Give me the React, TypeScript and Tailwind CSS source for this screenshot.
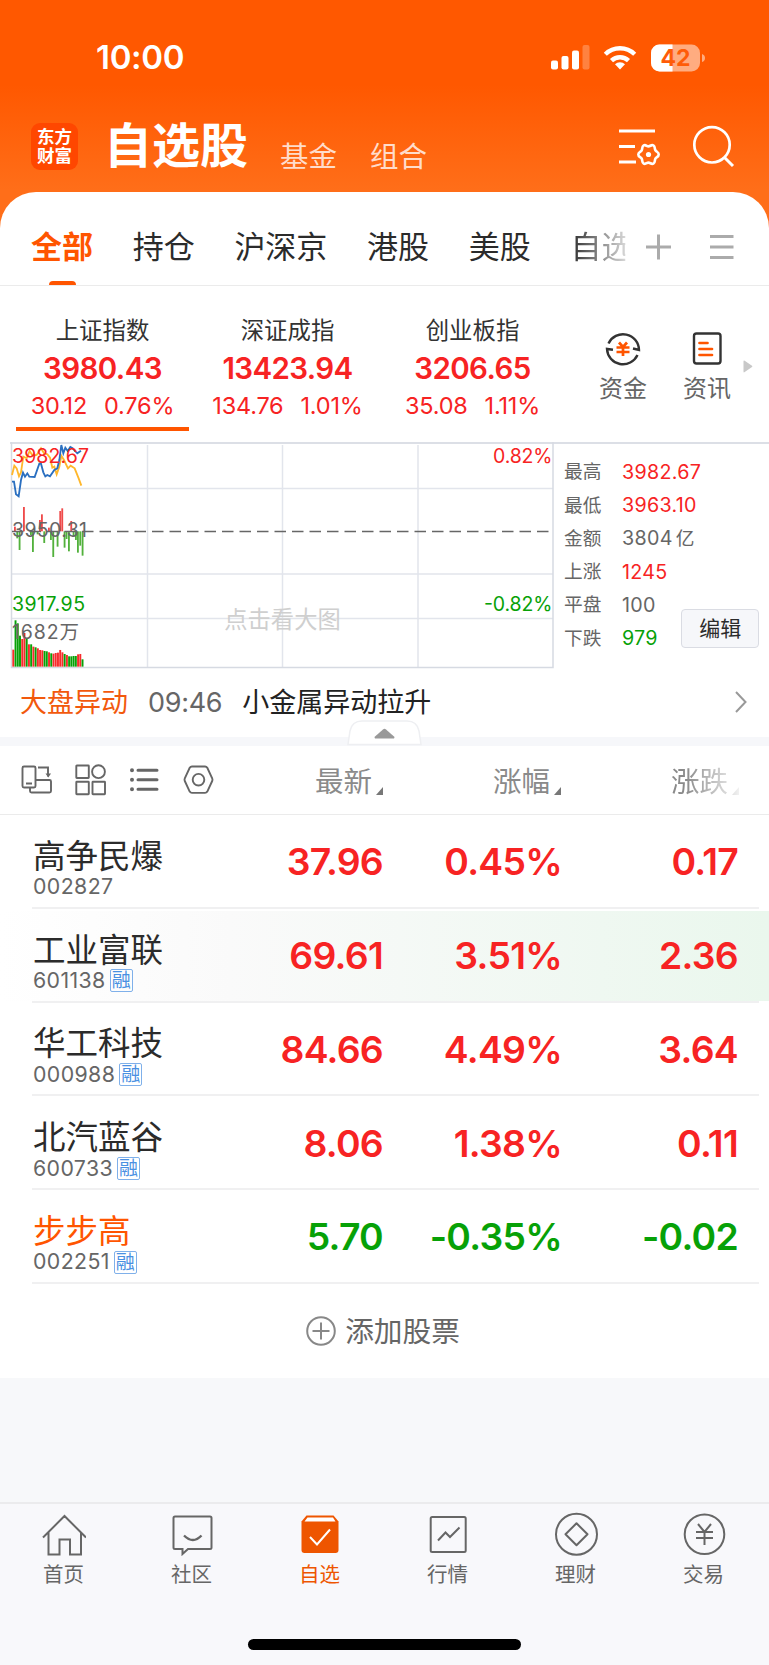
import clsx from "clsx";
import { ReactNode } from "react";

const TABS = ["全部", "持仓", "沪深京", "港股", "美股"];

const INDICES = [
  { name: "上证指数", value: "3980.43", diff: "30.12", rate: "0.76%" },
  { name: "深证成指", value: "13423.94", diff: "134.76", rate: "1.01%" },
  { name: "创业板指", value: "3206.65", diff: "35.08", rate: "1.11%" },
];

const STATS = [
  { label: "最高", value: "3982.67", color: "text-[#f72323]" },
  { label: "最低", value: "3963.10", color: "text-[#f72323]" },
  { label: "金额", value: "3804", unit: "亿", color: "text-[#666]" },
  { label: "上涨", value: "1245", color: "text-[#f72323]" },
  { label: "平盘", value: "100", color: "text-[#666]" },
  { label: "下跌", value: "979", color: "text-[#07a107]" },
];

type Stock = {
  name: string;
  code: string;
  margin?: boolean;
  price: string;
  rate: string;
  diff: string;
  down?: boolean;
  held?: boolean;
  flash?: boolean;
};

const STOCKS: Stock[] = [
  { name: "高争民爆", code: "002827", price: "37.96", rate: "0.45%", diff: "0.17" },
  { name: "工业富联", code: "601138", margin: true, price: "69.61", rate: "3.51%", diff: "2.36", flash: true },
  { name: "华工科技", code: "000988", margin: true, price: "84.66", rate: "4.49%", diff: "3.64" },
  { name: "北汽蓝谷", code: "600733", margin: true, price: "8.06", rate: "1.38%", diff: "0.11" },
  { name: "步步高", code: "002251", margin: true, price: "5.70", rate: "-0.35%", diff: "-0.02", down: true, held: true },
];

const PRICE_LINE =
  "36,140 42,140 48,178 56,184 63,135 69,113 75,125 82,115 88,125 104,126 118,86 123,86 130,112 136,124 142,120 150,124 163,105 172,100 178,75 184,30 190,55 196,38 203,48 211,36 218,40 232,55 243,47";
const AVERAGE_LINE =
  "36,120 43,92 50,100 57,124 63,112 70,65 80,70 89,48 98,62 110,60 123,40 132,55 142,58 150,68 157,98 163,95 170,118 178,95 184,62 192,75 204,100 212,92 224,100 236,130 244,152";

// [x, end of the bar], measured from the zero line at y = 289
const FLOW_BARS = [
  [45, 275], [52, 310], [59, 345], [72, 216], [93, 300], [99, 351], [113, 298], [120, 255],
  [126, 238], [133, 324], [147, 278], [153, 315], [160, 366], [173, 335], [181, 228], [187, 220],
  [194, 338], [200, 312], [207, 349], [214, 258], [221, 305], [228, 315], [234, 353], [241, 332], [248, 362],
];

const VOLUMES: [string, number][] = [
  ["r", 644], ["g", 556], ["g", 565], ["g", 602], ["r", 612], ["r", 594], ["g", 612], ["r", 628],
  ["g", 628], ["r", 635], ["g", 637], ["r", 640], ["r", 645], ["r", 646], ["g", 648], ["g", 649],
  ["r", 652], ["g", 655], ["r", 656], ["r", 654], ["r", 653], ["r", 645], ["r", 652], ["g", 657],
  ["r", 660], ["g", 664], ["g", 664], ["g", 663], ["g", 663], ["r", 658], ["r", 657], ["g", 673],
];

function StatusBar() {
  return (
    <div className="flex h-[115px] items-center pl-[96px] pr-[64px] text-white">
      <span className="text-[33px] font-semibold leading-none tracking-[-0.3px]">10:00</span>
      <svg className="ml-auto" width="154" height="28" viewBox="0 0 154 28" fill="#fff">
        <rect x="0" y="16.5" width="7" height="9" rx="2" />
        <rect x="10.5" y="12" width="7" height="13.5" rx="2" />
        <rect x="21" y="6.5" width="7" height="19" rx="2" />
        <rect x="31.5" y="1" width="7" height="24.5" rx="2" opacity="0.25" />
        <path d="M69 25.5l5-5.2a7 7 0 0 0-10 0z" />
        <path d="M60.5 16.7a12.2 12.2 0 0 1 17 0" fill="none" stroke="#fff" strokeWidth="4.4" />
        <path d="M54.3 10.3a21 21 0 0 1 29.4 0" fill="none" stroke="#fff" strokeWidth="4.4" />
        <clipPath id="charge">
          <rect x="100" y="0" width="21.5" height="28" />
        </clipPath>
        <rect x="100" y="0.5" width="49" height="27" rx="8.5" opacity="0.5" />
        <rect x="100" y="0.5" width="49" height="27" rx="8.5" clipPath="url(#charge)" />
        <path d="M151 10q3 1 3 4t-3 4z" opacity="0.5" />
        <text x="124.5" y="22.3" fill="#ff5c08" fontSize="23" fontWeight="700" textAnchor="middle">42</text>
      </svg>
    </div>
  );
}

function TitleBar() {
  return (
    <div className="flex h-[77px] items-start pl-[31px] pr-[32px] text-white">
      <div className="mt-[8px] flex h-[47px] w-[47px] flex-col items-center justify-center rounded-[9px] bg-[#ff4700] text-[17.5px] font-bold leading-[18.5px]">
        <span>东方</span>
        <span>财富</span>
      </div>
      <h1 className="ml-[26px] mt-[7px] whitespace-nowrap text-[48px] font-bold leading-[48px]">自选股</h1>
      <span className="ml-[32px] mt-[27px] text-[28.5px] leading-[30px] text-[#ffdccb]">基金</span>
      <span className="ml-[33px] mt-[27px] text-[28.5px] leading-[30px] text-[#ffdccb]">组合</span>
      <svg className="ml-auto mt-[10px]" width="118" height="46" viewBox="0 0 118 46" fill="none" stroke="#fff" strokeWidth="3">
        <path d="M0 6h36M0 21.5h16M0 37h17" />
        <path
          d="M19.3 29.5c0-2.6 2.4-2.4 3.4-4.2s0-3.8 2-4.900c2.2-1 3 1 4.800 1s2.700-2 4.900-1c2 1.100.9 3.100 2 4.900s3.300 1.600 3.300 4.200-2.300 2.400-3.300 4.200 0 3.800-2 4.900c-2.200 1-3.100-1-4.900-1s-2.600 2-4.800 1c-2-1.100-1-3.100-2-4.900s-3.400-1.600-3.400-4.200z"
          strokeWidth="2.6"
        />
        <circle cx="29.5" cy="29.5" r="2.6" fill="#fff" stroke="none" />
        <circle cx="93" cy="19.8" r="17.7" strokeWidth="2.7" />
        <path d="M105.5 32.5l8.500 8.5" strokeWidth="3" />
      </svg>
    </div>
  );
}

function GroupTabs() {
  return (
    <div className="flex h-[94px] items-stretch border-b border-[#ebebeb] pl-[31px] pr-[35px] text-[31px] text-[#2b2b2b]">
      <div className="flex gap-[39.7px]">
        {TABS.map((tab, i) => (
          <div
            key={tab}
            className={clsx("flex flex-col items-center", i === 0 && "font-bold text-[#ff5500]")}
          >
            <span className="mt-[35px] leading-[40px]">{tab}</span>
            {i === 0 && <i className="mt-auto h-[4px] w-[27px] rounded-t-sm bg-[#ff5500]" />}
          </div>
        ))}
        <span className="mt-[35px] whitespace-nowrap leading-[40px] [mask-image:linear-gradient(to_right,#000_0%,rgba(0,0,0,0.2)_88%,transparent_90%)]">
          自选
        </span>
      </div>
      <svg className="ml-auto mt-[42px]" width="88" height="26" viewBox="0 0 88 26" stroke="#ababab" strokeWidth="3">
        <path d="M0 13h25M12.5 0.5v25M64 2.5h23.5M64 13h23.5M64 23.5h23.5" />
      </svg>
    </div>
  );
}

function Shortcut({ label, children }: { label: string; children: ReactNode }) {
  return (
    <div className="flex w-[48px] flex-col items-center text-[24px] leading-[30px] text-[#666]">
      <svg width="36" height="36" viewBox="0 0 36 36" fill="none" strokeWidth="2.4" stroke="#333">
        {children}
      </svg>
      <span className="mt-[7px] whitespace-nowrap">{label}</span>
    </div>
  );
}

function IndexStrip() {
  return (
    <div className="flex h-[156px] pl-[10px] pr-[16px]">
      {INDICES.map((item, i) => (
        <div key={item.name} className="flex w-[185px] flex-col items-center pt-[32px]">
          <span className="text-[23.4px] leading-[26px] text-[#333]">{item.name}</span>
          <span className="mt-[8px] text-[29.5px] font-semibold leading-[32px] tracking-[-0.6px] text-[#f72323]">{item.value}</span>
          <span className="mt-[8px] flex gap-[17px] text-[23.5px] leading-[28px] tracking-[-0.2px] text-[#f72323]">
            <span>{item.diff}</span>
            <span>{item.rate}</span>
          </span>
          {i === 0 && <i className="mt-[7px] h-[4px] w-[173px] bg-[#ff5500]" />}
        </div>
      ))}
      <div className="ml-auto flex items-start gap-[36px] pt-[45px]">
        <Shortcut label="资金">
          <path d="M3.5 12.5A16 16 0 0 1 34 19l-6-1.5M32.5 24A16 16 0 0 1 2 18l6 .8" />
          <path d="M14 11.5l4 4.5 4-4.5M11.5 16.5h13M11.5 21h13M18 16v9" stroke="#ff5500" strokeWidth="2.7" />
        </Shortcut>
        <Shortcut label="资讯">
          <rect x="5" y="2.5" width="26.5" height="30" rx="2.5" />
          <path d="M10.5 12h8M10.5 18h12.500M10.5 24h12.500" stroke="#ff5500" strokeWidth="2.700" strokeLinecap="round" />
        </Shortcut>
      </div>
      <svg className="ml-[12px] mt-[74px]" width="10" height="13" viewBox="0 0 10 13">
        <path d="M0.5 1.5q0-1.5 1.2-.7l7.3 5q.8.7 0 1.3l-7.300 5q-1.200.8-1.200-.7z" fill="#c8c8c8" />
      </svg>
    </div>
  );
}

function MinuteChart() {
  return (
    <svg width="544" height="228" viewBox="0 0 544 228" fontSize="19.5" className="-mt-[2px] shrink-0">
      <g stroke="#e2e5ec" strokeWidth="1.5" fill="none">
        <path d="M1 46.5h542M1 132h542M1 176.5h542M137.5 3v222M272.5 3v222M408 3v222" />
        <path d="M1.5 0v225.5h541.500V0" stroke="#d6dae2" />
      </g>
      <g transform="translate(-10 -7) scale(0.3333)">
        {FLOW_BARS.map(([x, y]) => (
          <rect
            key={x}
            x={x - 3}
            y={Math.min(y, 289)}
            width="5.5"
            height={Math.abs(289 - y)}
            fill={y < 289 ? "#ef4a4a" : "#52b13c"}
          />
        ))}
        {VOLUMES.map(([side, y], i) => (
          <rect key={i} x={37 + i * 6.7} y={y} width="5.8" height={695 - y} fill={side === "r" ? "#f72c2c" : "#07a107"} />
        ))}
        <polyline points={AVERAGE_LINE} fill="none" stroke="#ffb72b" strokeWidth="5.5" />
        <polyline points={PRICE_LINE} fill="none" stroke="#2a6fc0" strokeWidth="5.5" />
      </g>
      <path d="M2 89.5h540" stroke="#666" strokeWidth="1.3" strokeDasharray="11.5 6" />
      <text x="2" y="21" fill="#f72323" textLength="77">3982.67</text>
      <text x="2" y="95" fill="#666" textLength="75">3950.31</text>
      <text x="2" y="169" fill="#07a107" textLength="73">3917.95</text>
      <text x="2" y="197" fill="#666" textLength="67">1682万</text>
      <text x="483" y="21" fill="#f72323" textLength="59.5">0.82%</text>
      <text x="474" y="169" fill="#07a107" textLength="68.5">-0.82%</text>
      <text x="272.5" y="185.5" fill="#cfcfcf" fontSize="23.3" textAnchor="middle">点击看大图</text>
    </svg>
  );
}

function MarketPanel() {
  return (
    <div className="flex h-[228px] pl-[10px]">
      <div className="flex w-full border-t-2 border-[#dcdfe6]">
        <MinuteChart />
        <div className="flex grow items-start justify-between pl-[10px] pr-[12px] pt-[12px]">
          <dl className="shrink-0">
            {STATS.map((s) => (
              <div key={s.label} className="flex h-[33.25px] items-center leading-none">
                <dt className="w-[58px] text-[18.7px] text-[#666]">{s.label}</dt>
                <dd className={clsx("text-[19.7px] tracking-[0.3px]", s.color)}>
                  {s.value}
                  {s.unit && <span className="ml-[3px] text-[18.7px]">{s.unit}</span>}
                </dd>
              </div>
            ))}
          </dl>
          <button className="-ml-[20px] mt-[153px] h-[39px] w-[78px] shrink-0 rounded-[4px] border border-[#dadce3] bg-[#f6f7fa] text-[21px] leading-none text-[#2b2b2b]">
            编辑
          </button>
        </div>
      </div>
    </div>
  );
}

function NewsLine() {
  return (
    <div className="relative flex h-[67px] items-start pl-[20px] pr-[22px] pt-[15px] text-[27px] leading-[36px]">
      <span className="text-[#f2590d]">大盘异动</span>
      <span className="ml-[20px] tracking-[-0.3px] text-[#666]">09:46</span>
      <span className="ml-[20px] text-[#222]">小金属异动拉升</span>
      <svg className="ml-auto mt-[6px]" width="12" height="22" viewBox="0 0 12 22" fill="none" stroke="#999" strokeWidth="2">
        <path d="M1 1l9.5 10L1 21" />
      </svg>
      {/* collapse handle, sits across the separator band */}
      <svg className="absolute left-[347px] top-[50px]" width="75" height="26" viewBox="0 0 75 26">
        <path d="M1 24.5L3 11Q5 1 15 1h45q10 0 12 10l2 13.5z" fill="#fff" stroke="#eeeff2" strokeWidth="1.5" />
        <path d="M28 18.500q-1-1 0-2l8-7q1.500-1.300 3 0l8 7q1 1 0 2z" fill="#999" />
      </svg>
    </div>
  );
}

function SortLabel({ children, className }: { children: ReactNode; className?: string }) {
  return (
    <span className={clsx("flex w-[178px] items-center justify-end gap-[4px] pt-[3px] text-[28.5px] leading-[36px] text-[#8a8a8a]", className)}>
      {children}
      <svg className="mt-[18px]" width="7" height="8" viewBox="0 0 7 8">
        <path d="M7 0v8H0z" fill="#777" />
      </svg>
    </span>
  );
}

function ListHeader() {
  return (
    <div className="flex h-[69px] items-center border-b border-[#ebebeb] pr-[30px]">
      <svg className="ml-[19px]" width="196" height="32" viewBox="0 0 196 32" fill="none" stroke="#666" strokeWidth="1.9">
        <rect x="3.5" y="2.5" width="13" height="21" rx="1.5" />
        <path d="M7 19.500h6M19 3.500h10v9M11 24v3q0 1.500 1.500 1.500h18q1.500 0 1.500-1.500v-9.500q0-1.500-1.500-1.500H17" />
        <path d="M26.500 9.500h5.500l-2.700 4z" fill="#666" stroke="none" />
        <rect x="57.3" y="1.5" width="12.5" height="12.5" rx="0.5" />
        <circle cx="79.5" cy="7.7" r="6.4" />
        <rect x="57.3" y="17.8" width="12.5" height="12.5" rx="0.5" />
        <rect x="73.5" y="17.8" width="12.5" height="12.5" rx="0.5" />
        <path d="M113 6.3h0M113 15.7h0M113 25.2h0" strokeWidth="4" strokeLinecap="round" />
        <path d="M119 6.3h19M119 15.7h19M119 25.2h19" strokeWidth="3" strokeLinecap="round" />
        <path d="M173 2.5h13q1.500 0 2.300 1.300l4.900 10.600q.6 1.300 0 2.600l-4.900 10.600q-.8 1.300-2.300 1.300h-13q-1.500 0-2.300-1.300L165.800 17q-.6-1.300 0-2.600l4.900-10.600q.8-1.300 2.300-1.300z" />
        <circle cx="179.500" cy="15.700" r="5.800" />
      </svg>
      <SortLabel className="-ml-[10px]">最新</SortLabel>
      <SortLabel>涨幅</SortLabel>
      <SortLabel className="[mask-image:linear-gradient(to_right,#000_70%,rgba(0,0,0,0.1)_100%)]">涨跌</SortLabel>
    </div>
  );
}

function StockRow({ stock }: { stock: Stock }) {
  return (
    <li
      className={clsx(
        "h-[93.8px] pl-[32px] pr-[10px]",
        stock.flash && "bg-[linear-gradient(to_right,#fff,#fafafa_30%,#eaf7ed)] bg-[length:100%_90px] bg-[position:0_2px] bg-no-repeat"
      )}
    >
      <div className="flex h-full items-center border-b-2 border-[#f0f0f1] pr-[20px]">
        <div className="flex w-[172px] flex-col pl-px pt-[16px]">
          <span className={clsx("text-[32.5px] leading-[36px]", stock.held ? "text-[#ff5500]" : "text-[#2b2b2b]")}>
            {stock.name}
          </span>
          <span className="flex h-[24px] items-center gap-[4px] text-[21.3px] leading-none tracking-[0.4px] text-[#666]">
            {stock.code}
            {stock.margin && (
              <span className="flex h-[23px] w-[23px] items-center justify-center rounded-[2px] border-[1.5px] border-[#7fb0ea] text-[19px] tracking-normal text-[#4a90e2]">
                融
              </span>
            )}
          </span>
        </div>
        <div
          className={clsx(
            "flex pt-[2px] text-right text-[37.3px] font-semibold leading-none tracking-[-0.7px]",
            stock.down ? "text-[#07a107]" : "text-[#f72323]"
          )}
        >
          <span className="w-[179px]">{stock.price}</span>
          <span className="w-[179px]">{stock.rate}</span>
          <span className="w-[176px]">{stock.diff}</span>
        </div>
      </div>
    </li>
  );
}

function NavItem({ label, active, children }: { label: string; active?: boolean; children: ReactNode }) {
  return (
    <div className={clsx("flex w-[128px] flex-col items-center", active ? "text-[#ee5500]" : "text-[#666]")}>
      <svg width="44" height="44" viewBox="0 0 44 44" fill="none" stroke="currentColor" strokeWidth="2">
        {children}
      </svg>
      <span className="mt-[7px] text-[20.5px] leading-[24px]">{label}</span>
    </div>
  );
}

function BottomNav() {
  return (
    <nav className="flex h-[163px] flex-col items-center border-t-2 border-[#ebebed] bg-[#f8f8fb]">
      <div className="-ml-[2px] flex pt-[8px]">
        <NavItem label="首页">
          <path d="M1 25.5L22.500 4 44 25.500M6.500 20v22.500H17.500V27.500h10.500v15h11V20" />
        </NavItem>
        <NavItem label="社区">
          <path d="M5 4.500h35q1.500 0 1.500 1.500v29.500q0 1.500-1.500 1.500H18l-5.500 5v-5H5Q3.500 37 3.500 35.500V6Q3.500 4.500 5 4.500z" />
          <path d="M14 23.500q9 9 17.500 0" strokeWidth="2.300" />
        </NavItem>
        <NavItem label="自选" active>
          <path d="M8.500 3.500h27l5 6v28.500q0 3-3 3h-31q-3 0-3-3V9.500z" fill="currentColor" stroke="none" />
          <path d="M9.500 5.500h25.500l2.500 4h-31z" fill="#fff" stroke="none" />
          <path d="M12 25l7 7.500 13-15" stroke="#fff" strokeWidth="2" />
        </NavItem>
        <NavItem label="行情">
          <rect x="4.7" y="5" width="35" height="35" rx="1.5" />
          <path d="M12 28.500l7.500-8 4.500 4.500 9.500-9.500" />
        </NavItem>
        <NavItem label="理财">
          <circle cx="22.5" cy="22.3" r="20.5" />
          <path d="M22.500 11.300l11 11-11 11-11-11z" strokeLinejoin="round" />
        </NavItem>
        <NavItem label="交易">
          <circle cx="22.5" cy="22.3" r="19.8" />
          <path d="M16 12l6.500 8 6.500-8M14 20h17M14 26h17M22.500 19v14" />
        </NavItem>
      </div>
      <div className="mb-[15px] mt-auto h-[11px] w-[273px] rounded-full bg-black" />
    </nav>
  );
}

export default function App() {
  return (
    <div className="flex h-[1665px] w-[769px] flex-col overflow-hidden bg-[#f7f8fa] bg-[linear-gradient(#ff5800_85px,#ff6e19_190px)] bg-[length:100%_250px] bg-no-repeat font-[Inter,'Noto_Sans_CJK_SC',sans-serif]">
      <StatusBar />
      <TitleBar />
      <main className="h-[1186px] shrink-0 rounded-t-[36px] bg-white">
        <GroupTabs />
        <IndexStrip />
        <MarketPanel />
        <NewsLine />
        <div className="h-[9px] bg-[#f6f7fa]" />
        <ListHeader />
        <ul>
          {STOCKS.map((stock) => (
            <StockRow key={stock.code} stock={stock} />
          ))}
        </ul>
        <button className="flex h-[95px] w-full items-center justify-center gap-[9px] pr-[3px] text-[28.7px] text-[#666]">
          <svg width="30" height="30" viewBox="0 0 30 30" fill="none" stroke="#888" strokeWidth="2">
            <circle cx="15" cy="15" r="13.8" />
            <path d="M15 6.5v17M6.5 15h17" />
          </svg>
          添加股票
        </button>
      </main>
      <div className="grow" />
      <BottomNav />
    </div>
  );
}
